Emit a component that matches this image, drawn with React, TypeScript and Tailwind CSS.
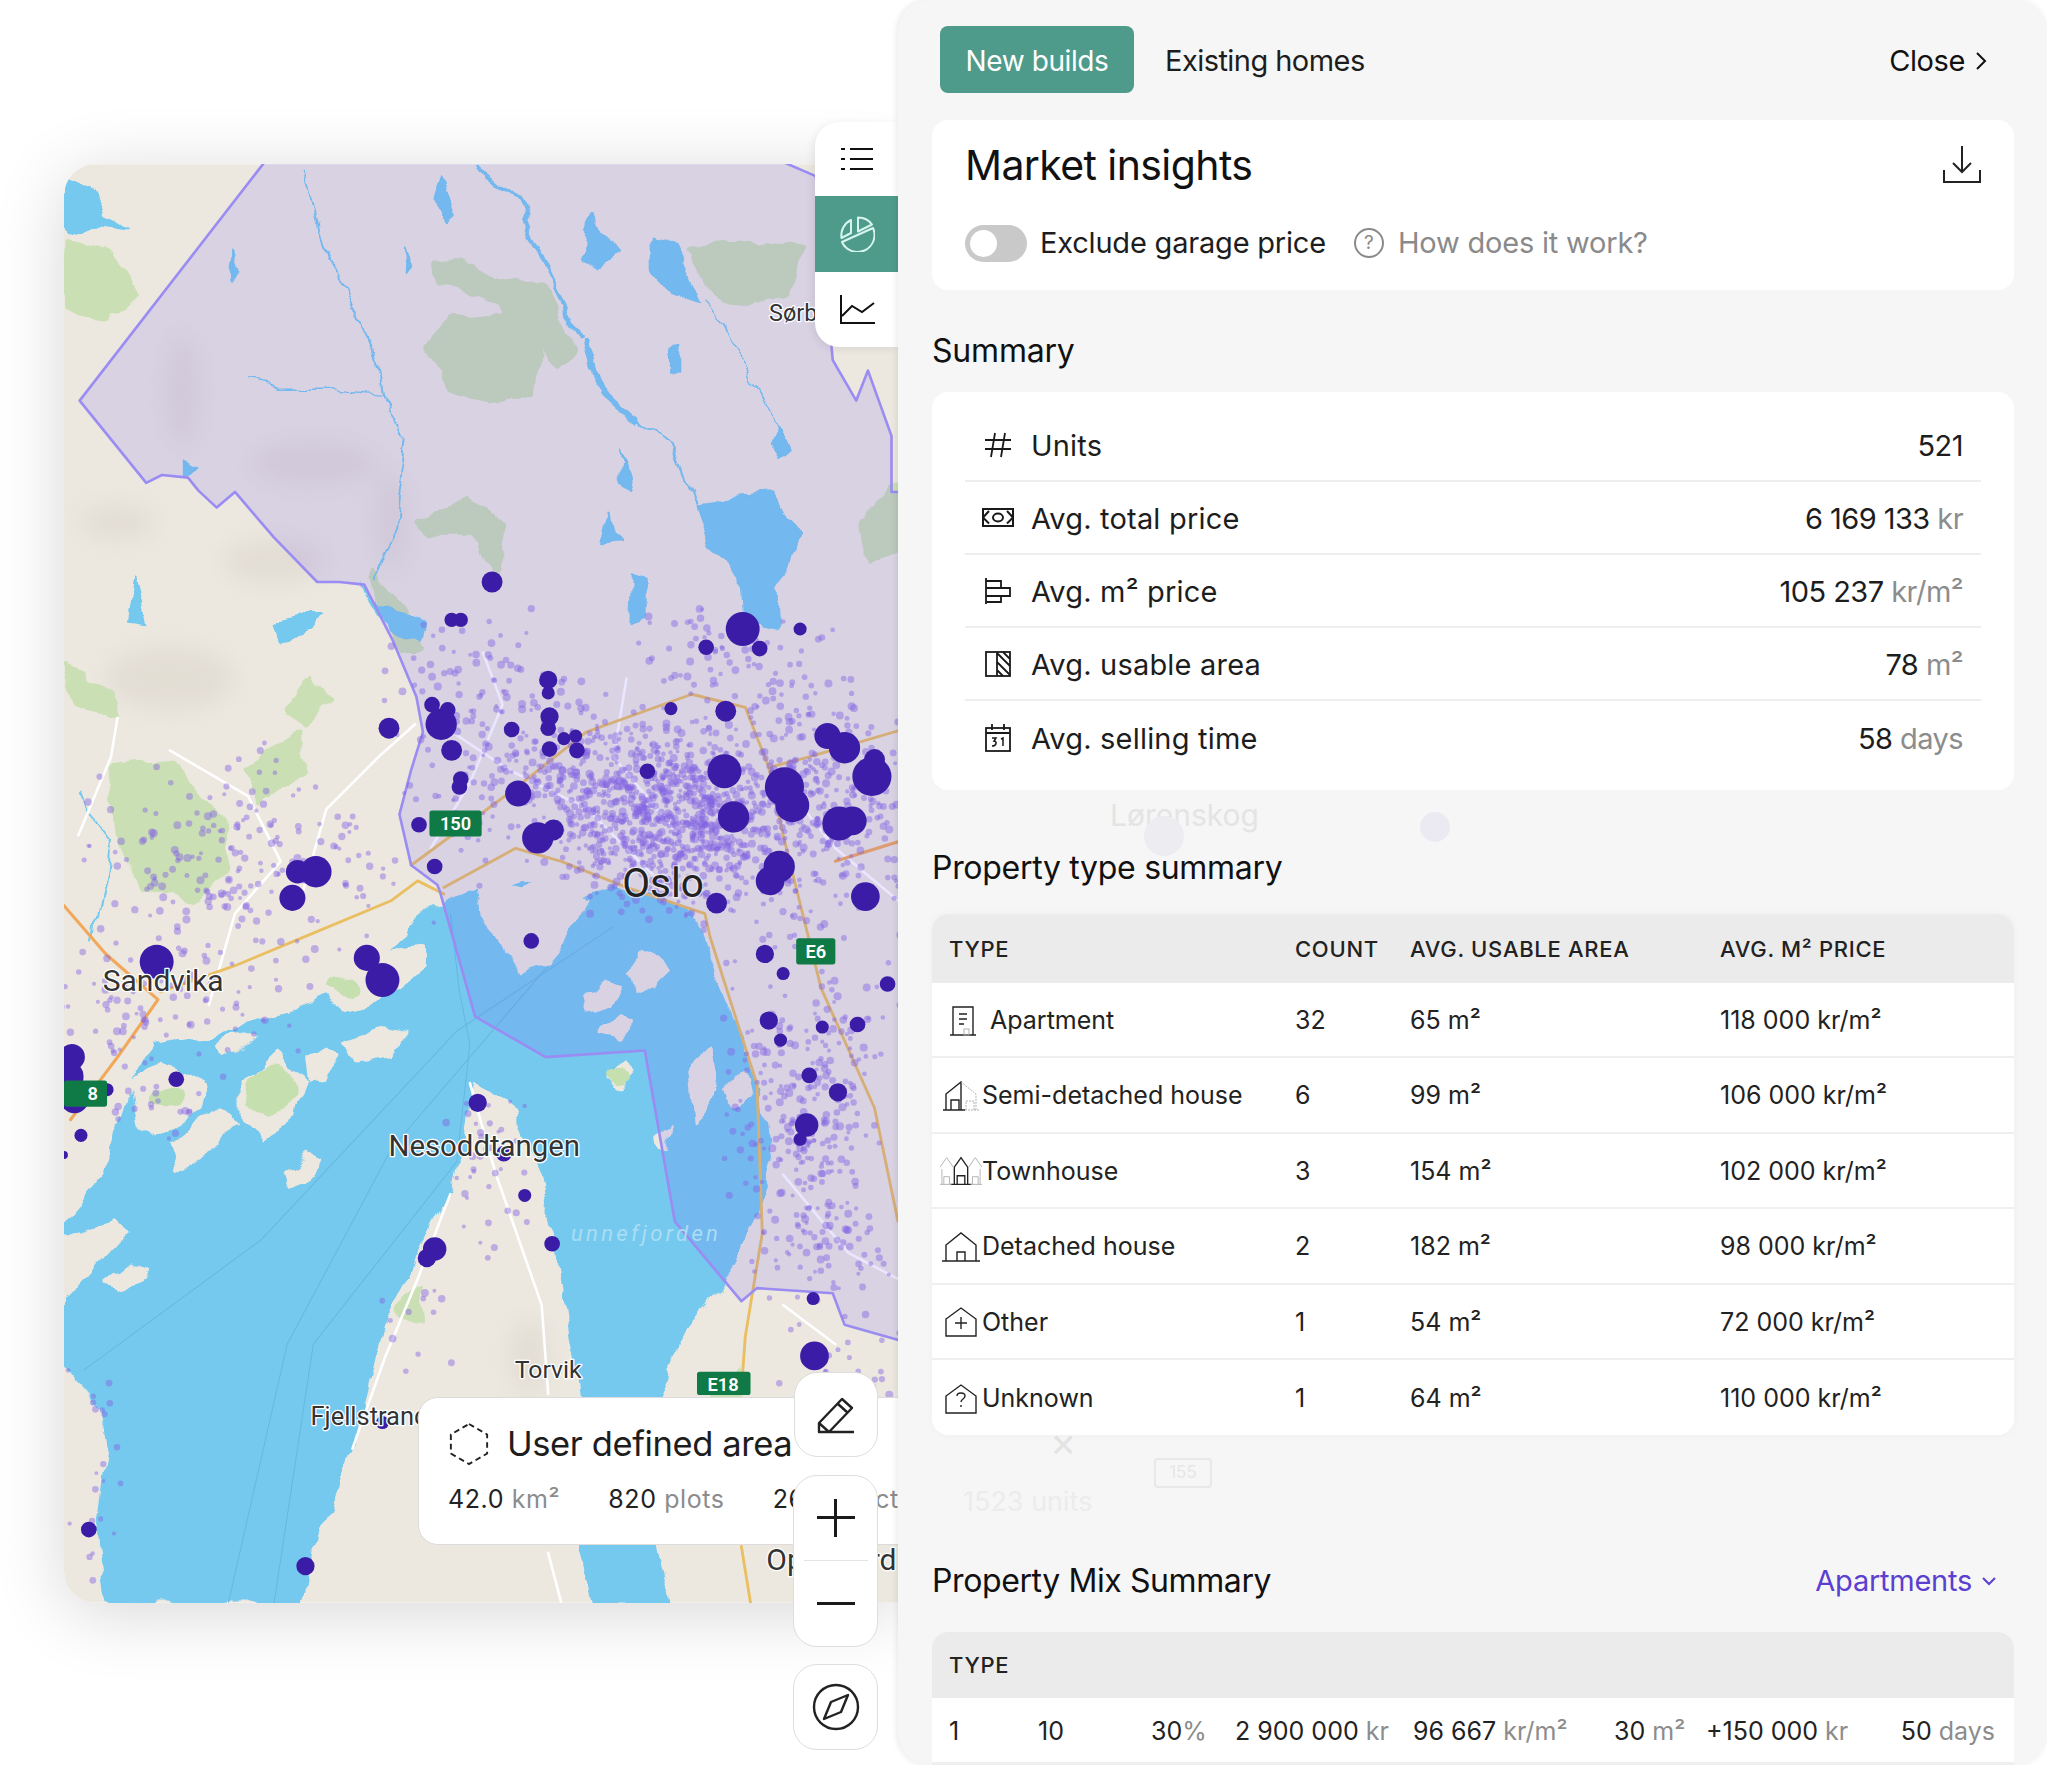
import type { ReactNode } from "react"

const font = { fontFamily: "Inter, 'Liberation Sans', sans-serif" }

type Dot = [number, number, number]

const bigDots: Dot[] = [
  [377, 446, 8], [346, 475, 5.5], [353, 475, 5.5], [569, 482, 13], [541, 496, 6], [582, 497, 6], [613, 482, 5],
  [420, 521, 7], [420, 531, 5], [298, 558, 8], [338, 555, 12], [331, 540, 6], [343, 544, 6], [392, 559, 6],
  [421, 549, 7], [420, 558, 6], [432, 566, 5], [441, 564, 5], [442, 575, 6], [421, 574, 6], [346, 575, 8],
  [353, 597, 6], [352, 603, 6], [514, 543, 5], [556, 545, 8], [496, 591, 6], [397, 608, 10], [555, 591, 13],
  [634, 564, 10], [647, 573, 12], [670, 582, 8], [668, 595, 15], [601, 603, 15], [607, 617, 13], [562, 626, 12],
  [643, 631, 13], [653, 629, 11], [412, 642, 12], [424, 636, 8], [333, 664, 6], [321, 632, 6], [242, 668, 12],
  [228, 668, 9], [224, 688, 10], [597, 664, 12], [590, 675, 11], [663, 687, 11], [549, 692, 8], [120, 737, 13],
  [281, 734, 10], [293, 751, 13], [407, 721, 6], [586, 731, 7], [600, 746, 5], [680, 754, 6], [589, 782, 7],
  [598, 797, 5], [630, 787, 5], [657, 785, 6], [620, 824, 6], [642, 837, 7], [618, 862, 9], [613, 873, 5],
  [366, 845, 7], [386, 884, 6], [402, 916, 5], [423, 953, 6], [333, 957, 9], [327, 964, 7], [623, 995, 5],
  [624, 1039, 11], [55, 810, 10], [52, 825, 12], [57, 842, 11], [82, 835, 5], [135, 827, 6], [62, 870, 5],
  [49, 885, 3], [68, 1172, 6], [234, 1200, 7], [293, 1090, 5], [650, 1060, 5],
]

// small listing dots, scattered from a fixed seed so the map stays the same
let seed = 7
const rand = () => {
  seed = (seed * 16807) % 2147483647
  return seed / 2147483647
}
const gauss = () => (rand() + rand() + rand() - 1.5) / 0.75

const clusters: [number, number, number, number, number][] = [
  [515, 625, 62, 48, 900],
  [420, 590, 70, 50, 240],
  [630, 620, 45, 60, 260],
  [620, 850, 42, 90, 280],
  [630, 960, 35, 35, 60],
  [190, 660, 90, 55, 200],
  [130, 770, 70, 30, 80],
  [360, 520, 45, 35, 60],
  [560, 510, 60, 30, 80],
  [375, 880, 20, 50, 35],
  [320, 1010, 15, 30, 12],
  [70, 1120, 18, 70, 24],
  [120, 840, 35, 35, 24],
  [645, 1060, 35, 30, 30],
]

const smallDots: Dot[] = clusters.flatMap(([cx, cy, sx, sy, n]) =>
  Array.from({ length: n }, (): Dot => [cx + gauss() * sx, cy + gauss() * sy, 1.5 + rand() * 1.6]),
)

const islands = [
  "368,674 372,700 385,730 400,745 420,735 445,705 450,690 430,670 400,680",
  "100,830 125,815 160,830 155,850 120,870 105,860",
  "130,880 170,850 180,860 160,880 135,895",
  "185,830 210,808 235,830 225,855 200,870 185,855",
  "247,762 280,730 322,725 325,740 292,765 262,772",
  "263,800 290,788 310,792 300,810 270,815",
  "164,800 180,792 195,796 180,805 166,806",
  "236,815 250,805 257,812 250,826 238,828",
  "140,780 155,770 162,778 150,788",
  "220,900 235,884 243,888 232,902 222,907",
  "49,950 90,935 97,945 60,985 49,992",
  "79,985 100,968 112,972 90,988",
  "481,745 495,731 512,745 500,757 486,757",
  "449,765 462,748 472,752 465,770 452,776",
  "463,792 476,780 485,785 472,796",
  "467,825 480,814 486,820 475,832",
  "528,820 545,805 552,835 532,860",
  "560,835 572,822 576,840 564,848",
  "505,870 515,862 512,880",
]

const greens = [
  "328,265 345,245 390,240 412,265 408,300 378,308 345,298",
  "526,195 560,182 612,190 605,225 570,235 540,215",
  "49,186 85,195 100,225 80,245 49,240",
  "85,590 130,585 170,625 175,665 150,690 110,680 90,640",
  "335,200 420,225 440,270 425,280 380,230 340,215",
  "285,440 300,455 312,480 325,500 305,500 295,475",
  "320,400 360,385 385,400 378,440 365,410 330,410",
  "190,590 225,565 235,590 200,615",
  "220,540 240,520 255,535 230,560",
  "50,510 85,530 93,550 60,540",
  "660,400 688,370 688,420 665,430",
  "120,1110 140,1130 130,1160 110,1140",
  "548,1060 565,1050 575,1090 555,1100",
  "305,1005 320,985 322,1010",
  "458,1100 475,1060 490,1110 470,1130",
]

const lakes = [
  "49,135 70,145 80,165 97,176 70,172 49,178",
  "535,385 560,380 590,378 611,410 605,435 595,450 596,482 570,476 568,440 545,420",
  "337,131 350,165 342,172 332,150",
  "450,165 475,195 458,205 448,195",
  "500,182 515,190 535,232 515,225 500,205",
  "514,268 522,262 522,285 514,285",
  "484,440 497,445 497,472 483,476",
  "598,327 606,345 598,352 592,340",
  "476,346 485,377 475,372",
  "467,390 472,414 462,418",
  "103,444 110,470 112,480 98,478",
  "211,478 240,472 250,472 240,485 215,490",
  "275,447 290,465 325,480 322,492 296,482",
  "311,190 316,205 310,212",
  "181,190 185,210 178,215",
  "140,352 152,358 140,365",
]

const Map = () => (
  <svg viewBox="49 126 639 1102" className="w-full h-full block">
    <defs>
      <filter id="rough" x="0" y="0" width="700" height="1300" filterUnits="userSpaceOnUse">
        <feTurbulence type="fractalNoise" baseFrequency="0.035" numOctaves="3" seed="4" />
        <feDisplacementMap in="SourceGraphic" scale="16" xChannelSelector="R" yChannelSelector="G" />
        <feGaussianBlur stdDeviation="0.5" />
      </filter>
      <filter id="shade" x="0" y="0" width="700" height="1300" filterUnits="userSpaceOnUse">
        <feGaussianBlur stdDeviation="9" />
      </filter>
    </defs>
    <rect x="49" y="126" width="639" height="1102" fill="#ece8e0" />
    <g fill="#d8d2c6" opacity="0.45" filter="url(#shade)">
      <ellipse cx="130" cy="520" rx="50" ry="25" />
      <ellipse cx="210" cy="430" rx="40" ry="18" />
      <ellipse cx="140" cy="300" rx="14" ry="45" />
      <ellipse cx="90" cy="400" rx="30" ry="14" />
      <ellipse cx="240" cy="355" rx="50" ry="18" />
      <ellipse cx="300" cy="400" rx="14" ry="40" />
      <ellipse cx="405" cy="1040" rx="15" ry="30" />
      <ellipse cx="380" cy="1150" rx="30" ry="14" />
    </g>
    <g filter="url(#rough)">
      {greens.map((p) => (
        <polygon key={p} points={p} fill="#cadfb4" stroke="#cadfb4" strokeWidth="4" strokeLinejoin="round" />
      ))}
      <polygon
        points="49,940 80,900 100,835 120,800 180,790 240,770 300,725 345,688 400,675 440,690 470,680 500,690 530,700 545,740 565,790 585,850 590,895 570,950 555,975 520,1030 505,1068 490,1110 512,1228 455,1228 445,1190 447,1072 436,1000 416,897 395,850 360,827 346,910 315,971 292,1015 270,1111 243,1177 229,1228 82,1228 75,1170 84,1110 80,1080 49,1045"
        fill="#74c9ee"
        stroke="#74c9ee"
        strokeWidth="3"
        strokeLinejoin="round"
      />
      {islands.map((p) => (
        <polygon key={p} points={p} fill="#ece8e0" stroke="#ece8e0" strokeWidth="3" strokeLinejoin="round" />
      ))}
      <g fill="#c6dfae">
        <ellipse cx="208" cy="835" rx="20" ry="20" />
        <ellipse cx="125" cy="840" rx="14" ry="8" />
        <ellipse cx="262" cy="755" rx="13" ry="6" />
        <ellipse cx="475" cy="824" rx="9" ry="5" />
      </g>
      {lakes.map((p) => (
        <polygon key={p} points={p} fill="#74c9ee" stroke="#74c9ee" strokeWidth="1.5" strokeLinejoin="round" />
      ))}
      <g fill="none" stroke="#74c9ee" strokeLinecap="round" strokeLinejoin="round">
        <path d="M234 127 L250 190 L285 265 L292 300 L310 338 L301 409 L288 444" strokeWidth="1.4" />
        <path d="M191 291 L215 296 L250 296 L292 300" strokeWidth="1" />
        <path d="M364 127 L395 152 L415 200 L445 260" strokeWidth="3" />
        <path d="M449 264 L460 300 L485 323" strokeWidth="5" />
        <path d="M485 323 L517 342 L535 385" strokeWidth="1.5" />
        <path d="M540 230 L582 300 L598 330" strokeWidth="1" />
        <path d="M58 610 L85 645 L72 720" strokeWidth="1.5" />
      </g>
    </g>
    <g fill="none" stroke="#62b4dd" strokeWidth="0.8" opacity="0.8">
      <path d="M64 1050 L200 950 L350 790 L470 710" />
      <path d="M175 1228 L220 1030 L300 880 L420 740" />
      <path d="M210 1228 L240 1030 L350 890 L360 800" />
      <path d="M360 800 L352 760 L345 700" />
    </g>
    <g fill="none" stroke="#fff" strokeWidth="2" strokeLinecap="round" strokeLinejoin="round">
      <path d="M130 575 L190 610 L215 660 L180 700 L160 770" />
      <path d="M230 690 L250 620 L290 580 L318 555" />
      <path d="M90 550 L85 580 L60 640" />
      <path d="M345 560 L390 590 L450 620 L500 670" />
      <path d="M360 830 L380 900 L415 1000 L420 1068" />
      <path d="M345 915 L320 980 L295 1040 L270 1110" />
      <path d="M420 1190 L430 1228" />
      <path d="M600 1000 L640 1030" />
      <path d="M600 900 L650 960 L688 980" />
      <path d="M600 600 L640 650 L688 690" />
      <path d="M370 500 L385 540 L360 600 L330 650" />
      <path d="M480 520 L470 580 L520 640" />
    </g>
    <g fill="none" stroke="#f1a85a" strokeWidth="2.4" strokeLinecap="round" strokeLinejoin="round">
      <path d="M49 694 L81 731 L121 766 L90 810 L54 858" />
      <path d="M640 660 L688 645" />
    </g>
    <g fill="none" stroke="#e9bf62" strokeWidth="2.2" strokeLinecap="round" strokeLinejoin="round">
      <path d="M123 760 L180 740 L240 715 L300 690 L320 675 L340 685" />
      <path d="M315 663 L395 604 L449 561 L530 532 L571 542 L589 588 L620 580 L688 560" />
      <path d="M340 680 L395 650 L430 660 L480 680 L540 700 L544 718 L580 831 L584 945 L571 1024 L568 1065" />
      <path d="M589 588 L600 640 L629 757 L670 849 L688 936" />
      <path d="M568 1185 L575 1228" />
    </g>
    <polygon
      points="206,120 61,307 112,370 124,364 144,366 152,376 166,389 180,377 210,412 243,446 260,446 279,448 301,491 319,534 324,561 315,590 306,624 315,663 335,678 337,683 364,779 418,810 494,805 517,936 568,997 580,987 638,991 647,1015 700,1030 700,377 683,377 683,334 665,284 656,307 638,276 625,135 590,120"
      fill="rgba(110,85,250,0.15)"
      stroke="#9a8cf2"
      strokeWidth="2"
      strokeLinejoin="round"
    />
    {smallDots.map(([x, y, r], i) => (
      <circle key={i} cx={x} cy={y} r={r} fill="#8263e2" opacity="0.45" />
    ))}
    {bigDots.map(([x, y, r], i) => (
      <circle key={i} cx={x} cy={y} r={r} fill="#3a1ca6" />
    ))}
    <g fill="#0f7a45">
      <rect x="329" y="621" width="40" height="20" rx="2" />
      <rect x="610" y="719" width="30" height="20" rx="2" />
      <rect x="534" y="1051" width="41" height="18" rx="2" />
      <rect x="49" y="828" width="33" height="20" rx="2" />
    </g>
    <g fill="#fff" fontSize="14" fontWeight="600" textAnchor="middle" fontFamily="Roboto, sans-serif">
      <text x="349" y="636">150</text>
      <text x="625" y="734">E6</text>
      <text x="554" y="1066">E18</text>
      <text x="71" y="843">8</text>
    </g>
    <g
      fill="#333"
      stroke="#fff"
      strokeWidth="2"
      strokeLinejoin="round"
      paintOrder="stroke"
      textAnchor="middle"
      fontFamily="Roboto, sans-serif"
    >
      <text x="508" y="687" fontSize="31" fill="#222" stroke="rgba(255,255,255,0.6)">Oslo</text>
      <text x="125" y="759" fontSize="23">Sandvika</text>
      <text x="371" y="886" fontSize="22.5">Nesoddtangen</text>
      <text x="420" y="1056" fontSize="19">Torvik</text>
      <text x="283" y="1092" fontSize="19.5">Fjellstrand</text>
      <text x="612" y="246" fontSize="18">Sørby</text>
      <text x="637" y="1203" fontSize="23">Oppegård</text>
    </g>
    <text
      x="495"
      y="951"
      fontSize="17"
      fontStyle="italic"
      letterSpacing="2.5"
      textAnchor="middle"
      fill="#a9ddf3"
      fontFamily="Roboto, sans-serif"
    >
      unnefjorden
    </text>
  </svg>
)

const ListIcon = () => (
  <svg viewBox="0 0 34 24" className="w-[34px] h-6" fill="none" stroke="#111" strokeWidth="2">
    <path d="M1 2h4M1 12h4M1 22h4M10 2h23M10 12h23M10 22h23" />
  </svg>
)

const PieIcon = () => (
  <svg viewBox="0 0 36 36" className="w-9 h-9" fill="none" stroke="#d6f5ee" strokeWidth="2" strokeLinejoin="round">
    <path d="M3 26 L34 12 A17 17 0 1 1 3 26z" />
    <path d="M19 1.5 V15.5 L33 8.5 A17 17 0 0 0 19 1.5z" />
    <path d="M12 4 V17 L2.5 22 A17 17 0 0 1 12 4z" />
  </svg>
)

const ChartIcon = () => (
  <svg viewBox="0 0 36 30" className="w-9 h-[30px]" fill="none" stroke="#111" strokeWidth="2">
    <path d="M2 0v28h34M3 21l10-10 10 6 12-9" />
  </svg>
)

const HexIcon = () => (
  <svg viewBox="0 0 44 46" className="w-[42px] h-11" fill="none" stroke="#222" strokeWidth="2" strokeDasharray="6 4">
    <path d="M22 2 41 13v20L22 44 3 33V13z" />
  </svg>
)

const PencilIcon = () => (
  <svg viewBox="0 0 40 40" className="w-10 h-10" fill="none" stroke="#222" strokeWidth="2.4" strokeLinejoin="round">
    <path d="M3 37V28L26 4l10 9-23 24zM3 28l10 9M22 9l10 9M13 37h25" />
  </svg>
)

const CompassIcon = () => (
  <svg viewBox="0 0 48 48" className="w-12 h-12" fill="none" stroke="#222" strokeWidth="2.4" strokeLinejoin="round">
    <circle cx="24" cy="24" r="22" />
    <path d="M36 12 29 29 12 36l7-17z" />
  </svg>
)

const stroke = { fill: "none", stroke: "#1a1a1a", strokeWidth: 1.6 }

const summaryIcons: Record<string, ReactNode> = {
  hash: (
    <svg viewBox="0 0 28 26" className="w-7 h-[26px]" {...stroke} strokeWidth={1.8}>
      <path d="M11 1 7 25M21 1l-4 24M1 8h26M1 17h26" />
    </svg>
  ),
  money: (
    <svg viewBox="0 0 32 20" className="w-8 h-5" {...stroke} strokeWidth={2}>
      <rect x="1" y="1" width="30" height="17" />
      <ellipse cx="16" cy="9.5" rx="5" ry="4" />
      <path d="M1 9.5 7 3M1 9.5l6 6M31 9.5 25 3M31 9.5l-6 6" />
    </svg>
  ),
  bars: (
    <svg viewBox="0 0 26 26" className="w-[26px] h-[26px]" {...stroke} strokeWidth={1.8}>
      <path d="M1 0v26M1 3h15v7H1M1 10h24v8H1M1 18h15v6H1" />
    </svg>
  ),
  area: (
    <svg viewBox="0 0 26 26" className="w-[26px] h-[26px]" {...stroke} strokeWidth={1.8}>
      <rect x="1" y="1" width="24" height="24" />
      <path d="M12 1v24M12 2l13 13M12 11l13 13M18 1l7 7M12 19l6 6" />
    </svg>
  ),
  calendar: (
    <svg viewBox="0 0 26 28" className="w-[26px] h-7" {...stroke} strokeWidth={1.8}>
      <rect x="1" y="4" width="24" height="23" />
      <path d="M1 9h24M7 0v6M19 0v6" />
      <path d="M7 14h4l-2 3c3 0 3 5-2 5M16 15l2-1v8" strokeWidth={1.5} />
    </svg>
  ),
}

const thin = { fill: "none", stroke: "#222", strokeWidth: 1.4 }
const ghost = { stroke: "#aaa", strokeWidth: 0.9 }

const typeIcons: Record<string, ReactNode> = {
  Apartment: (
    <svg viewBox="0 0 26 30" className="w-[26px] h-[30px] ml-[8px]" {...thin}>
      <path d="M3 29V1h20v28M0 29h26M9 8h8M9 13h8M9 18h5" />
      <rect x="14" y="23" width="5" height="6" {...ghost} />
    </svg>
  ),
  "Semi-detached house": (
    <svg viewBox="0 0 38 30" className="w-[38px] h-[30px]" {...thin}>
      <path d="M1 29h22M4 29V13L19 1v28M9 29V19h8v10" />
      <path d="M19 1l15 12v16M23 29h14M24 29V20h8v9" {...ghost} strokeDasharray="2 1" />
    </svg>
  ),
  Townhouse: (
    <svg viewBox="0 0 44 30" className="w-[44px] h-[30px] -ml-[2px]" {...thin}>
      <path d="M15 29V11l7-10 7 10v18M11 29h22M18 29V20h8v9" />
      <path d="M0 11 7 1l7 10M30 11l7-10 7 10M2 29V13M42 29V13M0 29h12M32 29h12M4 29v-8h6v8M34 29v-8h6v8" {...ghost} />
    </svg>
  ),
  "Detached house": (
    <svg viewBox="0 0 38 30" className="w-[38px] h-[30px]" {...thin}>
      <path d="M0 29h38M4 29V13L19 1l15 12v16M15 29V20h8v9" />
    </svg>
  ),
  Other: (
    <svg viewBox="0 0 34 30" className="w-[34px] h-[30px] ml-[2px]" {...thin}>
      <path d="M2 29V12L17 1l15 11v17zM17 10v12M11 16h12" />
    </svg>
  ),
  Unknown: (
    <svg viewBox="0 0 34 30" className="w-[34px] h-[30px] ml-[2px]" {...thin}>
      <path d="M2 29V12L17 1l15 11v17z" />
      <path d="M13 12c0-4 8-4 8 0 0 3-4 3-4 6M17 21v2" />
    </svg>
  ),
}

const summaryRows = [
  { icon: "hash", label: "Units", value: "521", unit: "" },
  { icon: "money", label: "Avg. total price", value: "6 169 133", unit: "kr" },
  { icon: "bars", label: "Avg. m² price", value: "105 237", unit: "kr/m²" },
  { icon: "area", label: "Avg. usable area", value: "78", unit: "m²" },
  { icon: "calendar", label: "Avg. selling time", value: "58", unit: "days" },
]

const typeRows = [
  { name: "Apartment", count: "32", area: "65 m²", price: "118 000 kr/m²" },
  { name: "Semi-detached house", count: "6", area: "99 m²", price: "106 000 kr/m²" },
  { name: "Townhouse", count: "3", area: "154 m²", price: "102 000 kr/m²" },
  { name: "Detached house", count: "2", area: "182 m²", price: "98 000 kr/m²" },
  { name: "Other", count: "1", area: "54 m²", price: "72 000 kr/m²" },
  { name: "Unknown", count: "1", area: "64 m²", price: "110 000 kr/m²" },
]

const Unit = ({ children }: { children: ReactNode }) => <span className="text-[#8c8c8c]">{children}</span>

const MapColumn = () => (
  <div className="relative w-[898px] h-[1765px] shrink-0 overflow-hidden pl-[64px] pt-[164px]">
    <div className="w-[834px] h-[1439px] rounded-l-[32px] overflow-hidden shadow-[0_10px_70px_rgba(0,0,0,0.16)]">
      <Map />
    </div>

    <div className="absolute left-[815px] top-[122px] w-[83px] h-[225px] bg-white rounded-l-[24px] flex flex-col overflow-hidden shadow-[-2px_2px_8px_rgba(0,0,0,0.08)]">
      <div className="h-[74px] flex items-center justify-center"><ListIcon /></div>
      <div className="h-[76px] bg-[#4e9b8b] flex items-center justify-center"><PieIcon /></div>
      <div className="h-[75px] flex items-center justify-center"><ChartIcon /></div>
    </div>

    <div className="absolute left-[418px] top-[1397px] w-[500px] h-[148px] bg-white rounded-[20px] border border-[#dcdcdc] pl-[29px] pt-[23px]">
      <div className="flex items-center gap-[17px]">
        <HexIcon />
        <span className="text-[34.5px] leading-[46px] text-[#1d1d1d] whitespace-nowrap tracking-[-0.4px]">User defined area</span>
      </div>
      <div className="flex gap-[48px] mt-[16px] text-[25px] leading-[32px] text-[#222] whitespace-nowrap tracking-[0.6px]">
        <span>42.0 <Unit>km²</Unit></span>
        <span>820 <Unit>plots</Unit></span>
        <span>26 <Unit>projects</Unit></span>
      </div>
    </div>

    <div className="absolute left-[794px] top-[1372px] w-[84px] h-[85px] bg-white rounded-[24px] border border-[#dedede] flex items-center justify-center">
      <PencilIcon />
    </div>
    <div className="absolute left-[793px] top-[1475px] w-[85px] h-[172px] bg-white rounded-[24px] border border-[#dedede] flex flex-col items-center">
      <div className="h-[85px] w-[64px] flex items-center justify-center border-b border-[#e4e4e4]">
        <span className="relative block w-[38px] h-[38px]">
          <span className="absolute left-0 top-[17px] w-[38px] h-[3px] bg-[#1a1a1a]" />
          <span className="absolute left-[17px] top-0 w-[3px] h-[38px] bg-[#1a1a1a]" />
        </span>
      </div>
      <div className="h-[85px] flex items-center justify-center">
        <span className="block w-[38px] h-[3px] bg-[#1a1a1a]" />
      </div>
    </div>
    <div className="absolute left-[793px] top-[1664px] w-[85px] h-[86px] bg-white rounded-[24px] border border-[#dedede] flex items-center justify-center">
      <CompassIcon />
    </div>
  </div>
)

const Header = () => (
  <div className="flex items-center justify-between pl-[42px] pr-[60px] h-[67px]">
    <div className="flex items-center gap-[31px]">
      <button className="h-[67px] w-[194px] pt-[2px] rounded-[8px] bg-[#4e9b8b] text-white text-[28px] tracking-[-0.4px]">New builds</button>
      <span className="pt-[2px] text-[29px] text-[#1d1d1d] tracking-[-0.55px]">Existing homes</span>
    </div>
    <div className="flex items-center gap-[10px] pt-[2px] text-[29px] text-[#111] tracking-[-0.4px]">
      Close
      <svg viewBox="0 0 12 20" className="w-[12px] h-5" fill="none" stroke="#111" strokeWidth="2">
        <path d="m2 2 8 8-8 8" />
      </svg>
    </div>
  </div>
)

const Insights = () => (
  <div className="mt-[27px] h-[170px] bg-white rounded-[16px] pl-[33px] pr-[32px] pt-[19px]">
    <div className="flex items-center justify-between">
      <h1 className="text-[41px] leading-[52px] text-[#111] tracking-[-0.6px]">Market insights</h1>
      <svg viewBox="0 0 40 38" className="w-10 h-[38px] -ml-[2px]" fill="none" stroke="#222" strokeWidth="2">
        <path d="M20 0v26M11 17l9 9 9-9M2 24v12h36V24" />
      </svg>
    </div>
    <div className="flex items-center mt-[32px]">
      <div className="w-[62px] h-[37px] rounded-full bg-[#c9c9c9] p-[5px]">
        <div className="w-[27px] h-[27px] rounded-full bg-white" />
      </div>
      <span className="ml-[13px] text-[29px] leading-[40px] text-[#1d1d1d] tracking-[-0.2px]">Exclude garage price</span>
      <div className="ml-[28px] w-[30px] h-[30px] rounded-full border-2 border-[#8a8a8a] text-[#8a8a8a] text-[19px] leading-[26px] text-center">?</div>
      <span className="ml-[14px] text-[29px] leading-[40px] text-[#8a8a8a] tracking-[-0.2px]">How does it work?</span>
    </div>
  </div>
)

const Summary = () => (
  <>
    <h2 className="mt-[40px] text-[32px] leading-[42px] text-[#111] tracking-[-0.2px]">Summary</h2>
    <div className="mt-[20px] h-[398px] bg-white rounded-[16px] px-[33px] pt-[17px]">
      {summaryRows.map((row, i) => (
        <div
          key={row.label}
          className={`h-[73px] flex items-center text-[29px] text-[#1d1d1d] pr-[18px] ${i < 4 ? "border-b-2 border-[#eeeeee]" : ""}`}
        >
          <div className="w-[66px] flex justify-center">{summaryIcons[row.icon]}</div>
          <span className="tracking-[0.2px] pt-[2px]">{row.label}</span>
          <span className="ml-auto tracking-[-0.55px] pt-[2px]">
            {row.value} {row.unit && <Unit>{row.unit}</Unit>}
          </span>
        </div>
      ))}
    </div>
  </>
)

const PropertyTypes = () => (
  <>
    <h2 className="mt-[57px] text-[32px] leading-[42px] text-[#111] tracking-[-0.3px]">Property type summary</h2>
    <div className="mt-[25px] rounded-[16px] bg-white overflow-hidden shadow-[0_0_10px_rgba(0,0,0,0.03)]">
      <div className="h-[69px] pt-[2px] bg-[#ebebeb] grid grid-cols-[363px_115px_310px_1fr] items-center text-[22px] font-medium text-[#222] tracking-[0.7px]">
        <span className="pl-[17px]">TYPE</span>
        <span>COUNT</span>
        <span>AVG. USABLE AREA</span>
        <span>AVG. M² PRICE</span>
      </div>
      {typeRows.map((row, i) => (
        <div
          key={row.name}
          className={`h-[75.4px] pt-[2px] grid grid-cols-[363px_115px_310px_1fr] items-center text-[25px] text-[#222] ${i < 5 ? "border-b-2 border-[#efefef]" : ""}`}
        >
          <div className="flex items-center pl-[10px]">
            <div className="w-[40px] flex">{typeIcons[row.name]}</div>
            <span className={row.name === "Apartment" ? "ml-[8px]" : ""}>{row.name}</span>
          </div>
          <span>{row.count}</span>
          <span>{row.area}</span>
          <span>{row.price}</span>
        </div>
      ))}
    </div>
  </>
)

const PropertyMix = () => (
  <>
    <div className="mt-[124px] flex items-center justify-between pr-[18px]">
      <h2 className="text-[32px] leading-[42px] text-[#111] tracking-[-0.4px]">Property Mix Summary</h2>
      <div className="flex items-center gap-[10px] text-[29px] text-[#5b3fd0] tracking-[-0.25px]">
        Apartments
        <svg viewBox="0 0 14 10" className="w-[14px] h-[10px]" fill="none" stroke="#5b3fd0" strokeWidth="2">
          <path d="m1 2 6 6 6-6" />
        </svg>
      </div>
    </div>
    <div className="mt-[29px] rounded-t-[16px] bg-white overflow-hidden">
      <div className="h-[66px] pt-[2px] bg-[#ebebeb] flex items-center pl-[17px] text-[22px] font-medium text-[#222] tracking-[0.7px]">TYPE</div>
      <div className="h-[68px] pt-[4px] flex items-center text-[25px] text-[#222] whitespace-nowrap border-b-4 border-[#efefef]">
        <span className="w-[106px] pl-[17px]">1</span>
        <span className="w-[113px]">10</span>
        <span className="w-[84px]">30<Unit>%</Unit></span>
        <span className="w-[178px]">2 900 000 <Unit>kr</Unit></span>
        <span className="w-[201px]">96 667 <Unit>kr/m²</Unit></span>
        <span className="w-[92px]">30 <Unit>m²</Unit></span>
        <span>+150 000 <Unit>kr</Unit></span>
        <span className="ml-auto pr-[19px]">50 <Unit>days</Unit></span>
      </div>
    </div>
  </>
)

const GhostMap = () => (
  <div className="absolute inset-0 pointer-events-none">
    <span className="absolute left-[212px] top-[793px] text-[30px] text-[#e4e4e4]">Lørenskog</span>
    <span className="absolute left-[522px] top-[812px] w-[30px] h-[30px] rounded-full bg-[#ebeaf3]" />
    <span className="absolute left-[246px] top-[816px] w-[40px] h-[40px] rounded-full bg-[#ededf1]" />
    <span className="absolute left-[65px] top-[1482px] text-[27px] text-[#ececec]">1523 units</span>
    <span className="absolute left-[256px] top-[1458px] w-[58px] h-[30px] border-2 border-[#e8e8e8] rounded-[4px] text-[17px] text-center text-[#e6e6e6]">155</span>
    <span className="absolute left-[152px] top-[1412px] text-[40px] text-[#e4e4e4]">×</span>
  </div>
)

export default function App() {
  return (
    <div className="w-[2047px] h-[1765px] flex bg-white overflow-hidden" style={font}>
      <MapColumn />
      <div className="relative flex-1 h-[1765px] bg-[#f6f6f6] rounded-[32px] overflow-hidden pt-[26px] shadow-[-1px_0_6px_rgba(0,0,0,0.1)]">
        <GhostMap />
        <div className="relative">
          <Header />
          <div className="pl-[34px] pr-[33px]">
            <Insights />
            <Summary />
            <PropertyTypes />
            <PropertyMix />
          </div>
        </div>
      </div>
    </div>
  )
}
